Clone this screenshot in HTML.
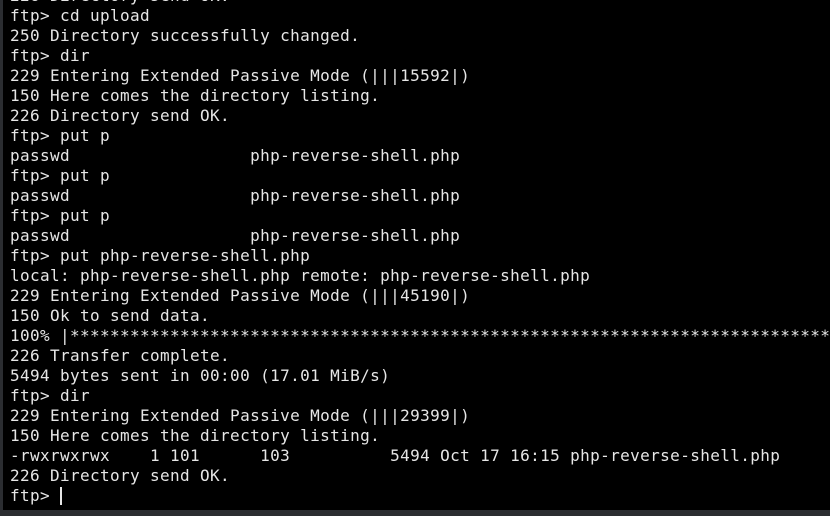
<html><head><style>
body{margin:0;width:830px;height:516px;background:#2b2d31;overflow:hidden}
#t{position:absolute;left:3px;top:0;width:827px;height:510px;background:#000}
pre{position:absolute;left:7px;top:-14px;margin:0;font-family:"DejaVu Sans Mono","Liberation Mono",monospace;font-size:16px;letter-spacing:0.37px;line-height:20px;color:#e6e6e6;white-space:pre}
.c{display:inline-block;width:1.5px;height:18px;background:#e6e6e6;vertical-align:-4px}
</style></head><body><div id="t"><pre>226 Directory send OK.
ftp> cd upload
250 Directory successfully changed.
ftp> dir
229 Entering Extended Passive Mode (|||15592|)
150 Here comes the directory listing.
226 Directory send OK.
ftp> put p
passwd                  php-reverse-shell.php
ftp> put p
passwd                  php-reverse-shell.php
ftp> put p
passwd                  php-reverse-shell.php
ftp> put php-reverse-shell.php
local: php-reverse-shell.php remote: php-reverse-shell.php
229 Entering Extended Passive Mode (|||45190|)
150 Ok to send data.
100% |*****************************************************************************
226 Transfer complete.
5494 bytes sent in 00:00 (17.01 MiB/s)
ftp> dir
229 Entering Extended Passive Mode (|||29399|)
150 Here comes the directory listing.
-rwxrwxrwx    1 101      103          5494 Oct 17 16:15 php-reverse-shell.php
226 Directory send OK.
ftp> <span class="c"></span></pre></div></body></html>
